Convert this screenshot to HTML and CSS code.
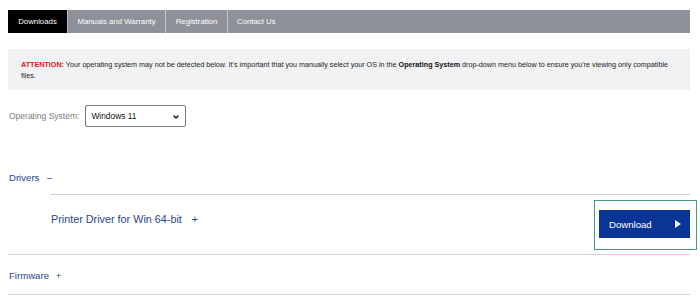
FILE: index.html
```html
<!DOCTYPE html>
<html lang="en">
<head>
<meta charset="utf-8">
<title>Downloads</title>
<link rel="stylesheet" href="styles.css">
</head>
<body>
<div class="page">
  <nav class="tabs">
    <a class="tab tab-downloads active">Downloads</a>
    <a class="tab tab-manuals">Manuals and Warranty</a>
    <a class="tab tab-registration">Registration</a>
    <a class="tab tab-contact">Contact Us</a>
  </nav>

  <div class="alert">
    <span class="attn">ATTENTION:</span> <span>Your operating system may not be detected below. It's important that you manually select your OS in the</span> <b>Operating System</b> <span>drop-down menu below to ensure you're viewing only compatible</span> <span>files.</span>
  </div>

  <div class="os-row">
    <label class="os-label" for="os">Operating System:</label>
    <div class="select-wrap">
      <select id="os" class="os-select">
        <option>Windows 11</option>
      </select>
      <svg class="chev" width="6" height="4" viewBox="0 0 6 4"><path d="M0.6 0.6 L3 3 L5.4 0.6" fill="none" stroke="#111" stroke-width="1.4"/></svg>
    </div>
  </div>

  <section class="group drivers">
    <div class="group-head">Drivers <span class="toggle minus">&ndash;</span></div>
    <div class="item">
      <div class="item-title">Printer Driver for Win 64-bit <span class="toggle plus">+</span></div>
      <div class="dl-wrap">
        <button class="dl-btn"><span>Download</span><svg width="6" height="8" viewBox="0 0 6 8"><path d="M0 0 L6 4 L0 8 Z" fill="#fff"/></svg></button>
      </div>
    </div>
  </section>

  <section class="group firmware">
    <div class="group-head">Firmware <span class="toggle plus">+</span></div>
  </section>
</div>
</body>
</html>
```

FILE: styles.css
```css
* { box-sizing: border-box; }
html, body { margin: 0; padding: 0; background: #fff; }
body {
  font-family: "Liberation Sans", Arial, Helvetica, sans-serif;
  color: #222;
}
.page {
  padding: 10px 10px 0 8px;
}

/* Tabs */
.tabs {
  display: flex;
  height: 23px;
  background: #8e9199;
}
.tab {
  display: flex;
  align-items: center;
  justify-content: center;
  color: #fff;
  font-size: 7.8px;
  text-decoration: none;
  border-right: 1px solid #c3c5ca;
}
.tab.active { background: #000; }
.tab-downloads { width: 60px; border-right-color: #b9bbc0; }
.tab-manuals { width: 98px; }
.tab-registration { width: 62px; }
.tab-contact { width: 62px; border-right: none; justify-content: flex-start; padding-left: 9px; }

/* Alert */
.alert {
  margin-top: 16px;
  background: #f1f2f3;
  padding: 10px 12px 8px 13px;
  font-size: 7.2px;
  line-height: 11px;
  color: #222;
  height: 41px;
}
.alert .attn { color: #e3161b; font-weight: bold; }
.alert b { font-weight: bold; color: #111; }

/* OS selector */
.os-row {
  margin-top: 15px;
  display: flex;
  align-items: center;
  gap: 6px;
}
.os-label {
  font-size: 8.5px;
  color: #7d7d7d;
  padding-left: 1px;
}
.select-wrap {
  position: relative;
  width: 101px;
  height: 22px;
}
.os-select {
  appearance: none;
  -webkit-appearance: none;
  width: 100%;
  height: 100%;
  border: 1px solid #7a7a7a;
  border-radius: 2px;
  background: #fff;
  font-family: "Liberation Sans", Arial, sans-serif;
  font-size: 8.4px;
  color: #111;
  padding: 0 0 0 5px;
  margin: 0;
}
.chev {
  position: absolute;
  right: 7px;
  top: 10px;
}

/* Groups */
.group {
  border-bottom: 1px solid #d4d4d4;
}
.drivers { margin-top: 41px; }
.group-head {
  font-size: 9.6px;
  line-height: 20px;
  color: #27458e;
  padding-left: 1px;
}
.toggle { margin-left: 4px; color: #27458e; }
.group-head .minus { margin-left: 5px; }
.drivers .group-head { padding-bottom: 6px; }
.item {
  margin-left: 42px;
  border-top: 1px solid #d4d4d4;
  display: flex;
  align-items: flex-start;
  justify-content: space-between;
  height: 60px;
  padding-top: 5px;
}
.item-title {
  font-size: 10.8px;
  line-height: 14px;
  color: #27458e;
  padding-top: 12px;
  padding-left: 1px;
}
.item-title .plus { margin-left: 7px; }
.dl-wrap {
  border: 1px solid #3f9a78;
  padding: 9px 6px 11px 4px;
  margin-right: -7px;
}
.dl-btn {
  display: flex;
  align-items: center;
  justify-content: space-between;
  width: 91px;
  height: 28px;
  background: #0a3597;
  border: none;
  color: #fff;
  font-family: "Liberation Sans", Arial, sans-serif;
  font-size: 9.6px;
  padding: 0 9px 0 10px;
  margin: 0;
}
.firmware .group-head {
  padding-top: 11px;
  padding-bottom: 8px;
}
```
